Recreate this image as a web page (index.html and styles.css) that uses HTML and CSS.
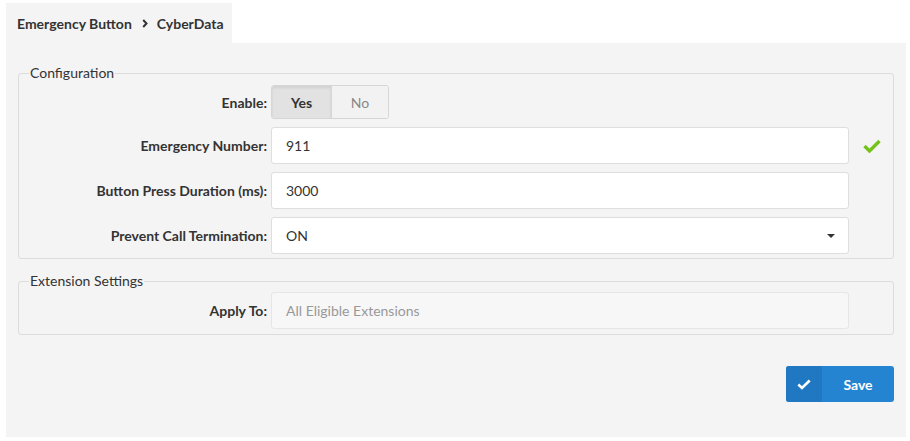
FILE: index.html
```html
<!doctype html>
<html>
<head>
<meta charset="utf-8">
<title>Emergency Button</title>
<link rel="stylesheet" href="styles.css">
</head>
<body>
<div class="tabs">
	<div class="tab">
		<span>Emergency Button</span>
		<svg class="crumb" width="6" height="9" viewBox="0 0 6 9"><path d="M1.2 1 L4.5 4.5 L1.2 8" fill="none" stroke="#333" stroke-width="2"/></svg>
		<span>CyberData</span>
	</div>
</div>
<div class="panel">
	<fieldset class="group config">
		<legend>Configuration</legend>
		<div class="row row-toggle">
			<label>Enable:</label>
			<div class="toggle">
				<span class="on">Yes</span>
				<span>No</span>
			</div>
		</div>
		<div class="row">
			<label>Emergency Number:</label>
			<div class="field">911</div>
			<svg class="ok" width="18" height="14" viewBox="0 0 18 14"><path d="M1.5 7 L6.5 12 L16.5 2" fill="none" stroke="#74c31b" stroke-width="3.4"/></svg>
		</div>
		<div class="row">
			<label>Button Press Duration (ms):</label>
			<div class="field">3000</div>
		</div>
		<div class="row">
			<label>Prevent Call Termination:</label>
			<div class="field select">ON<span class="caret"></span></div>
		</div>
	</fieldset>
	<fieldset class="group ext">
		<legend>Extension Settings</legend>
		<div class="row">
			<label>Apply To:</label>
			<div class="field disabled">All Eligible Extensions</div>
		</div>
	</fieldset>
	<div class="actions">
		<button class="save">
			<span class="save-icon"><svg width="14" height="11" viewBox="0 0 14 11"><path d="M1.3 5.5 L5 9 L12.7 1.5" fill="none" stroke="#fff" stroke-width="2.6"/></svg></span>
			<span class="save-text">Save</span>
		</button>
	</div>
</div>
</body>
</html>
```

FILE: styles.css
```css
body{
	margin:0;
	padding:3px 4px 4px 6px;
	font-family:Lato,"Liberation Sans",sans-serif;
	font-size:14px;
	color:#333;
	background:#fff;
}
.tabs{
	display:flex;
}
.tab{
	width:226px;
	height:40px;
	box-sizing:border-box;
	padding-left:11px;
	display:flex;
	align-items:center;
	gap:9px;
	background:#f4f4f4;
	font-weight:700;
	font-size:14px;
	color:#333;
}
.crumb{
	margin-left:1px;
}
.panel{
	background:#f4f4f4;
	height:394px;
	box-sizing:border-box;
	padding:22px 12px 0 12px;
}
.group{
	margin:0;
	padding:0;
	border:1px solid #dcdcdc;
	border-radius:3px;
	min-width:0;
}
.group legend{
	margin-left:10px;
	padding:0 1px;
	font-size:14px;
	line-height:16px;
	color:#333;
}
.config{
	padding:4px 0 4px 0;
}
.ext{
	margin-top:14px;
	padding:3px 0 5px 0;
}
.row{
	display:flex;
	align-items:center;
	height:37px;
	margin-bottom:8px;
}
.row:last-child{
	margin-bottom:0;
}
.row-toggle{
	height:34px;
}
.row label{
	width:248px;
	padding-right:4px;
	text-align:right;
	font-weight:700;
	font-size:14px;
	color:#333;
	flex:none;
}
.toggle{
	display:flex;
	height:34px;
	box-sizing:border-box;
	border:1px solid #d6d6d6;
	border-radius:3px;
	overflow:hidden;
}
.toggle span{
	width:56px;
	display:flex;
	align-items:center;
	justify-content:center;
	background:#f2f2f2;
	color:#888;
	font-size:14px;
}
.toggle .on{
	width:59px;
	background:#e2e2e2;
	color:#333;
	font-weight:700;
	border-right:1px solid #d6d6d6;
	box-shadow:inset 0 2px 3px rgba(0,0,0,0.08);
}
.field{
	width:578px;
	height:37px;
	box-sizing:border-box;
	border:1px solid #dedede;
	border-radius:3px;
	background:#fff;
	padding-left:14px;
	display:flex;
	align-items:center;
	font-size:14px;
	color:#333;
	position:relative;
}
.field.disabled{
	background:#f7f7f7;
	color:#999;
	border-color:#e6e6e6;
}
.caret{
	position:absolute;
	right:13px;
	top:16px;
	width:0;
	height:0;
	border-left:4px solid transparent;
	border-right:4px solid transparent;
	border-top:4px solid #333;
}
.ok{
	margin-left:14px;
	margin-top:1px;
}
.actions{
	display:flex;
	justify-content:flex-end;
	margin-top:31px;
}
.save{
	display:flex;
	width:108px;
	height:36px;
	padding:0;
	border:0;
	border-radius:3px;
	overflow:hidden;
	background:#2584d1;
	color:#fff;
	font-family:Lato,"Liberation Sans",sans-serif;
	font-weight:700;
	font-size:14px;
	cursor:pointer;
}
.save-icon{
	width:36px;
	display:flex;
	align-items:center;
	justify-content:center;
	background:#1f78c1;
}
.save-text{
	flex:1;
	display:flex;
	align-items:center;
	justify-content:center;
}
```
